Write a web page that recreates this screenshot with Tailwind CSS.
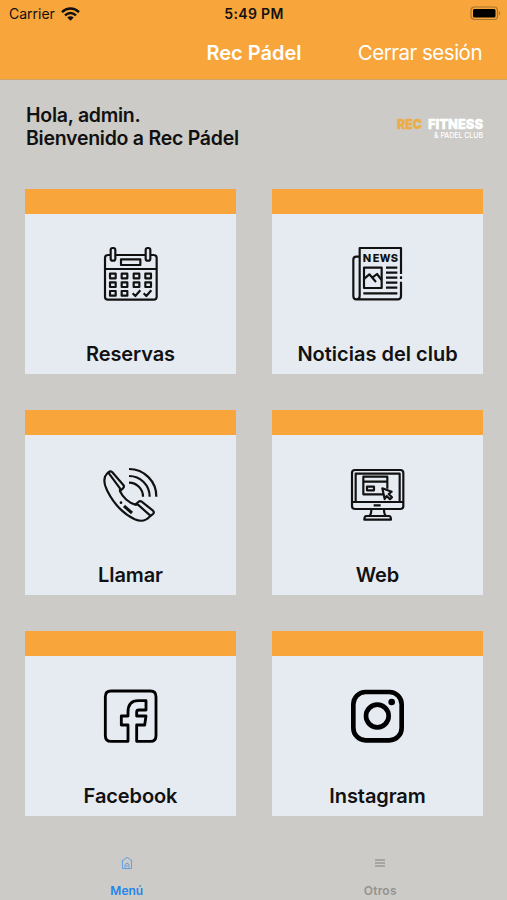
<!DOCTYPE html>

<html lang="es">
<head><meta charset="utf-8"/><title>Rec Pádel</title><script src="https://cdn.jsdelivr.net/npm/@tailwindcss/browser@4"></script></head>
<body class="bg-[#cccbc7] text-[#111] font-['Inter',sans-serif]">
<div class="w-[507px] h-[900px] flex flex-col overflow-hidden">
<header class="h-20 bg-[#f8a53b] border-b border-[#d3a468] shrink-0">
<div class="h-[27px] grid grid-cols-3 items-center pl-[9px] pr-[6px] text-sm leading-none">
<div class="flex items-center gap-[6px]">
<span class="text-[14px]">Carrier</span>
<svg class="w-[19px] h-[14px]" viewBox="0 0 19 14" fill="none" stroke="#111" stroke-width="2.5"><path d="M1 5.2C6 .4 13 .4 18 5.2M4 8.4c3.4-3 7.600-3 11 0"/><path d="M6.300 10.500c2-1.600 4.400-1.600 6.400 0L9.500 13.700z" fill="#111" stroke="none"/></svg>
</div>
<span class="text-center font-semibold text-[14px] whitespace-nowrap -ml-[2px] tracking-[0.35px]">5:49 PM</span>
<svg class="justify-self-end w-[31px] h-[15px]" viewBox="0 0 31 15"><rect x="1" y="1" width="26.500" height="12.500" rx="3.500" fill="none" stroke="#a8752f" stroke-width="1.200"/><rect x="3" y="3" width="22.500" height="8.500" rx="1.500" fill="#000"/><path d="M29 5v4.500c1.600-.8 1.600-3.700 0-4.500z" fill="#a8752f"/></svg>
</div>
<nav class="h-[52px] grid grid-cols-[1fr_auto_1fr] items-center pr-[25px] pl-[24px] text-white text-xl leading-none">
<span></span>
<h1 class="font-semibold -mr-[2px]">Rec Pádel</h1>
<a class="justify-self-end text-[20.500px] tracking-[-0.5px]" href="#">Cerrar sesión</a>
</nav>
</header>
<main class="pl-[25px] pr-6 pt-6">
<div class="flex justify-between h-[85px]">
<p class="font-semibold text-[19.500px] leading-[23px] tracking-[-0.26px] pl-px">Hola, admin.<br/>Bienvenido a Rec Pádel</p>
<svg class="w-[90px] h-7 mt-3 overflow-visible" viewBox="0 0 90 28" font-family="Inter, sans-serif">
<text x="4" y="12.500" font-size="13" font-weight="900" fill="#e9ae45" stroke="#e9ae45" stroke-width=".3" textLength="25" lengthAdjust="spacingAndGlyphs">REC</text>
<text x="35" y="12.500" font-size="13" font-weight="900" fill="#fff" stroke="#fff" stroke-width=".3" textLength="55" lengthAdjust="spacingAndGlyphs">FITNESS</text>
<text x="41" y="21.500" font-size="7.500" font-weight="500" fill="#fff" textLength="49" lengthAdjust="spacingAndGlyphs">&amp; PADEL CLUB</text>
</svg>
</div>
<div class="grid grid-cols-[211px_211px] gap-9 text-xl font-semibold text-center tracking-[-0.1px]">

<a class="block h-[185px] bg-[#e6ebf1] border-t-[25px] border-[#f8a53b]" href="#">
<svg class="w-[70px] h-[70px] mt-6 ml-[70px]" viewBox="0 0 210 210" fill="none" stroke="#111" stroke-width="6.500" stroke-linejoin="round">
<path d="M47 51H39q-9 0-9 9V176q0 9 9 9H176q9 0 9-9V60q0-9-9-9H167M61 51H152M30 93H185"/>
<rect x="47" y="30" width="14" height="38" rx="6"/><rect x="152" y="30" width="14" height="38" rx="6"/>
<rect x="78" y="64" width="58" height="17"/>
<path d="M45 107h17v14H45zM80 107h17v14H80zM116 107h17v14H116zM151 107h17v14H151zM45 133h17v14H45zM80 133h17v14H80zM116 133h17v14H116zM151 133h17v14H151zM45 159h17v14H45zM80 159h17v14H80z"/>
<path d="M113 166l8 8 15-17M146 166l8 8 15-17"/>
</svg>
<span class="block mt-8 leading-7">Reservas</span>
</a>

<a class="block h-[185px] bg-[#e6ebf1] border-t-[25px] border-[#f8a53b]" href="#">
<svg class="w-[70px] h-[70px] mt-6 ml-[70px]" viewBox="0 0 210 210" fill="none" stroke="#111" stroke-width="6.500" stroke-linejoin="round">
<path d="M177 108V30H53V174q0 10-10 10H167q10 0 10-10V131M177 115v8M53 56H43q-9 0-9 9V174q0 10 9 10"/>
<text x="63" y="73" font-family="Inter, sans-serif" font-size="33" font-weight="800" fill="#111" stroke="none"><tspan x="62">N</tspan><tspan x="92">E</tspan><tspan x="113" textLength="32" lengthAdjust="spacingAndGlyphs">W</tspan><tspan x="146">S</tspan></text>
<rect x="66" y="89" width="53" height="61"/>
<path d="M67 122l15-13 20 23M92 118l13-10 14 18M132 89h34M132 104h34M132 119h34M132 134h34M132 149h34M64 166h102"/>
</svg>
<span class="block mt-8 leading-7 tracking-[0px]">Noticias del club</span>
</a>

<a class="block h-[185px] bg-[#e6ebf1] border-t-[25px] border-[#f8a53b]" href="#">
<svg class="w-[70px] h-[70px] mt-[25px] ml-[70px]" viewBox="0 0 210 210" fill="none" stroke="#111" stroke-width="6.500" stroke-linejoin="round">
<path d="M52 37q-5-5-11-1C25 49 25 69 36 91 55 130 85 161 119 178c20 8 34 5 45-8l10-8q5-5 0-10L140 125q-5-4-10 1l-9 8C101 129 83 111 75 94l9-9q5-5 1-10z"/>
<path d="M40 38L75 85V94M121 134H129L166 167"/>
<path d="M87 138l24 21" stroke-width="9"/><circle cx="78" cy="128" r="4" fill="#111" stroke="none"/>
<path d="M102 27A82 82 0 0 1 184 110M102 48A62 62 0 0 1 164 110M102 68A42 42 0 0 1 144 110"/>
</svg>
<span class="block mt-[31px] leading-7">Llamar</span>
</a>

<a class="block h-[185px] bg-[#e6ebf1] border-t-[25px] border-[#f8a53b]" href="#">
<svg class="w-[70px] h-[70px] mt-[25px] ml-[70px]" viewBox="0 0 210 210" fill="none" stroke="#111" stroke-width="6.500" stroke-linejoin="round">
<rect x="30" y="30" width="154" height="117" rx="9"/>
<path d="M41 126V41H173V126M30 126H184M95 136h21M88 148q0 16-6 20M126 148q0 16 6 20"/>
<path d="M73 168H141q6 0 6 11H67q0-11 6-11z"/>
<path d="M126 103H64V50H136V86M64 65H136"/><rect x="75" y="80" width="21" height="11"/>
<path d="M121 85l28 10-9 7 10 10-6 6-10-10-6 9z" fill="#e6ebf1"/>
</svg>
<span class="block mt-[31px] leading-7">Web</span>
</a>

<a class="block h-[185px] bg-[#e6ebf1] border-t-[25px] border-[#f8a53b]" href="#">
<svg class="w-[70px] h-[70px] mt-6 ml-[70px]" viewBox="0 0 210 210" fill="none" stroke="#000" stroke-width="8.500" stroke-linejoin="round">
<path d="M99 184H48q-17 0-17-17V50q0-17 17-17H166q17 0 17 17V167q0 17-17 17H125V135H149L153 108H125V96q0-6 7-6H153V62H130Q99 62 99 96V108H79V135H99z"/>
</svg>
<span class="block mt-8 leading-7">Facebook</span>
</a>

<a class="block h-[185px] bg-[#e6ebf1] border-t-[25px] border-[#f8a53b]" href="#">
<svg class="w-[70px] h-[70px] mt-6 ml-[70px]" viewBox="0 0 210 210" fill="none" stroke="#000" stroke-width="14">
<rect x="34" y="36" width="145" height="145" rx="37"/><circle cx="106" cy="108" r="34"/><circle cx="149" cy="66" r="10" fill="#000" stroke="none"/>
</svg>
<span class="block mt-8 leading-7">Instagram</span>
</a>

</div>
</main>
<footer class="mt-auto h-[46px] grid grid-cols-2 text-[12px] font-semibold leading-none shrink-0">
<a class="flex flex-col items-center text-[#2684ec]" href="#">
<svg class="w-3 h-[14px] mt-[2px]" viewBox="0 0 12 14" fill="none" stroke="#659fdf" stroke-width="1"><path d="M.7 5L6 1.400 11.300 5M1.500 4.700v7.800h9V4.700M4 12V8.500q2-2.500 4 0V12M6 9v2"/></svg>
<span class="mt-[15px]">Menú</span>
</a>
<a class="flex flex-col items-center text-[#949390]" href="#">
<svg class="w-[10px] h-[14px] mt-[2px]" viewBox="0 0 10 14" stroke="#a6a5a1" stroke-width="2"><path d="M0 4h10M0 7h10M0 10h10"/></svg>
<span class="mt-[15px] tracking-[0.2px]">Otros</span>
</a>
</footer>
</div>
</body>
</html>
